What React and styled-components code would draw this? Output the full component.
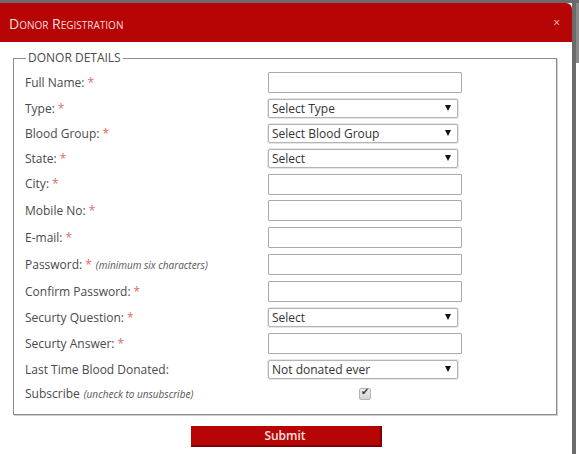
import React from "react";
import styled, { createGlobalStyle } from "styled-components";

const GlobalStyle = createGlobalStyle`
  html, body { margin: 0; padding: 0; background: #ffffff; }
  body { font-family: "Open Sans", "Liberation Sans", sans-serif; }
  * { box-sizing: border-box; }
`;

const Page = styled.div`
  display: flex;
  width: 579px;
  height: 454px;
  border-top: 3px solid #6b6b6b;
  overflow: hidden;
`;

const Modal = styled.div`
  width: 572px;
  flex-shrink: 0;
  display: flex;
  flex-direction: column;
  background: #ffffff;
`;

const Edge = styled.div`
  width: 4px;
  flex-shrink: 0;
  background: #6b6b6b;
`;

const Outside = styled.div`
  flex: 1;
  background: linear-gradient(#8a8a8a 0, #8a8a8a 60px, #ffffff 60px);
`;

const Header = styled.div`
  flex-shrink: 0;
  height: 39px;
  background: #b70404;
  border-top-right-radius: 6px;
  display: flex;
  align-items: center;
  justify-content: space-between;
  padding: 1px 12px 0 9px;
`;

const Title = styled.h1`
  margin: 0;
  font-size: 14px;
  font-weight: 400;
  font-variant: small-caps;
  color: #f6dede;
  letter-spacing: 0;
`;

const Close = styled.button`
  border: 0;
  background: none;
  padding: 0;
  color: #f3c9c9;
  font-size: 12px;
  font-family: "Open Sans", sans-serif;
  line-height: 1;
  cursor: pointer;
`;

const Body = styled.form`
  flex-shrink: 0;
  display: flex;
  flex-direction: column;
  align-items: center;
  padding: 9px 0 0 0;
`;

const Fieldset = styled.fieldset`
  align-self: flex-start;
  margin: 0 0 0 13px;
  width: 544px;
  border: 1px solid #8c8c8c;
  box-shadow: 1px 1px 0 #d0d0d0;
  padding: 4px 10px 8px 11px;
`;

const Legend = styled.legend`
  font-size: 12px;
  color: #4a4a4a;
  padding: 0 2px;
  margin-left: 1px;
  line-height: 14px;
`;

const Grid = styled.div`
  display: grid;
  grid-template-columns: 243px 194px;
  align-items: center;
`;

const Label = styled.label`
  font-size: 12px;
  color: #4a4a4a;
  line-height: 16px;
  white-space: nowrap;
`;

const Req = styled.span`
  color: #e46a6a;
  margin-left: 3px;
`;

const Note = styled.em`
  font-size: 10px;
  color: #555;
  margin-left: 4px;
`;

const Input = styled.input`
  display: block;
  width: 194px;
  height: 21px;
  margin: 3px 0 ${(p) => p.$gap ?? 3}px;
  border: 1px solid #a9a9a9;
  border-radius: 1px;
  background: #fff;
  font: 12px "Open Sans", sans-serif;
  padding: 0 4px;
`;

const SelectWrap = styled.div`
  position: relative;
  width: 190px;
  height: 19px;
  margin: 3px 0 3px;
`;

const Select = styled.select`
  appearance: none;
  -webkit-appearance: none;
  display: block;
  width: 100%;
  height: 100%;
  border: 1px solid #b4b4b4;
  border-radius: 2px;
  box-shadow: 0 0 0 1px #e6e6e6;
  background: #fff;
  color: #333;
  font: 12px "Open Sans", sans-serif;
  padding: 0 0 0 3px;
  line-height: 17px;
`;

const Arrow = styled.span`
  position: absolute;
  right: 7px;
  top: 6px;
  width: 0;
  height: 0;
  border-left: 3px solid transparent;
  border-right: 3px solid transparent;
  border-top: 6px solid #111;
  pointer-events: none;
`;

const CheckCell = styled.div`
  display: flex;
  justify-content: center;
  height: 24px;
  align-items: center;
`;

const Check = styled.input`
  appearance: none;
  -webkit-appearance: none;
  margin: 0;
  width: 12px;
  height: 12px;
  border: 1px solid #b5b5b5;
  border-radius: 2px;
  background: linear-gradient(#ececec, #d4d4d4);
  position: relative;
  &::after {
    content: "✔";
    position: absolute;
    left: 1px;
    top: -3px;
    font-size: 10px;
    color: #3a3a3a;
  }
`;

const Submit = styled.button`
  margin-top: 11px;
  width: 191px;
  height: 21px;
  background: #b70404;
  border: 0;
  border-right: 2px solid #7d0202;
  border-bottom: 2px solid #7d0202;
  color: #f6e0e0;
  font: 600 12px "Open Sans", sans-serif;
  padding: 0;
  cursor: pointer;
`;

const fields = [
  { label: "Full Name:", req: true, type: "input" },
  { label: "Type:", req: true, type: "select", value: "Select Type" },
  { label: "Blood Group:", req: true, type: "select", value: "Select Blood Group" },
  { label: "State:", req: true, type: "select", value: "Select" },
  { label: "City:", req: true, type: "input", gap: 2 },
  { label: "Mobile No:", req: true, type: "input" },
  { label: "E-mail:", req: true, type: "input" },
  { label: "Password:", req: true, type: "input", note: "(minimum six characters)", pw: true },
  { label: "Confirm Password:", req: true, type: "input", pw: true },
  { label: "Securty Question:", req: true, type: "select", value: "Select" },
  { label: "Securty Answer:", req: true, type: "input" },
  { label: "Last Time Blood Donated:", req: false, type: "select", value: "Not donated ever" },
];

export default function App() {
  return (
    <>
      <GlobalStyle />
      <Page>
        <Modal>
          <Header>
            <Title>Donor Registration</Title>
            <Close type="button">×</Close>
          </Header>
          <Body onSubmit={(e) => e.preventDefault()}>
            <Fieldset>
              <Legend>DONOR DETAILS</Legend>
              <Grid>
                {fields.map((f) => (
                  <React.Fragment key={f.label}>
                    <Label>
                      {f.label}
                      {f.req && <Req>*</Req>}
                      {f.note && <Note>{f.note}</Note>}
                    </Label>
                    {f.type === "input" ? (
                      <Input type={f.pw ? "password" : "text"} $gap={f.gap} />
                    ) : (
                      <SelectWrap>
                        <Select defaultValue={f.value}>
                          <option>{f.value}</option>
                        </Select>
                        <Arrow />
                      </SelectWrap>
                    )}
                  </React.Fragment>
                ))}
                <Label>
                  Subscribe<Note>(uncheck to unsubscribe)</Note>
                </Label>
                <CheckCell>
                  <Check type="checkbox" defaultChecked />
                </CheckCell>
              </Grid>
            </Fieldset>
            <Submit type="submit">Submit</Submit>
          </Body>
        </Modal>
        <Edge />
        <Outside />
      </Page>
    </>
  );
}
